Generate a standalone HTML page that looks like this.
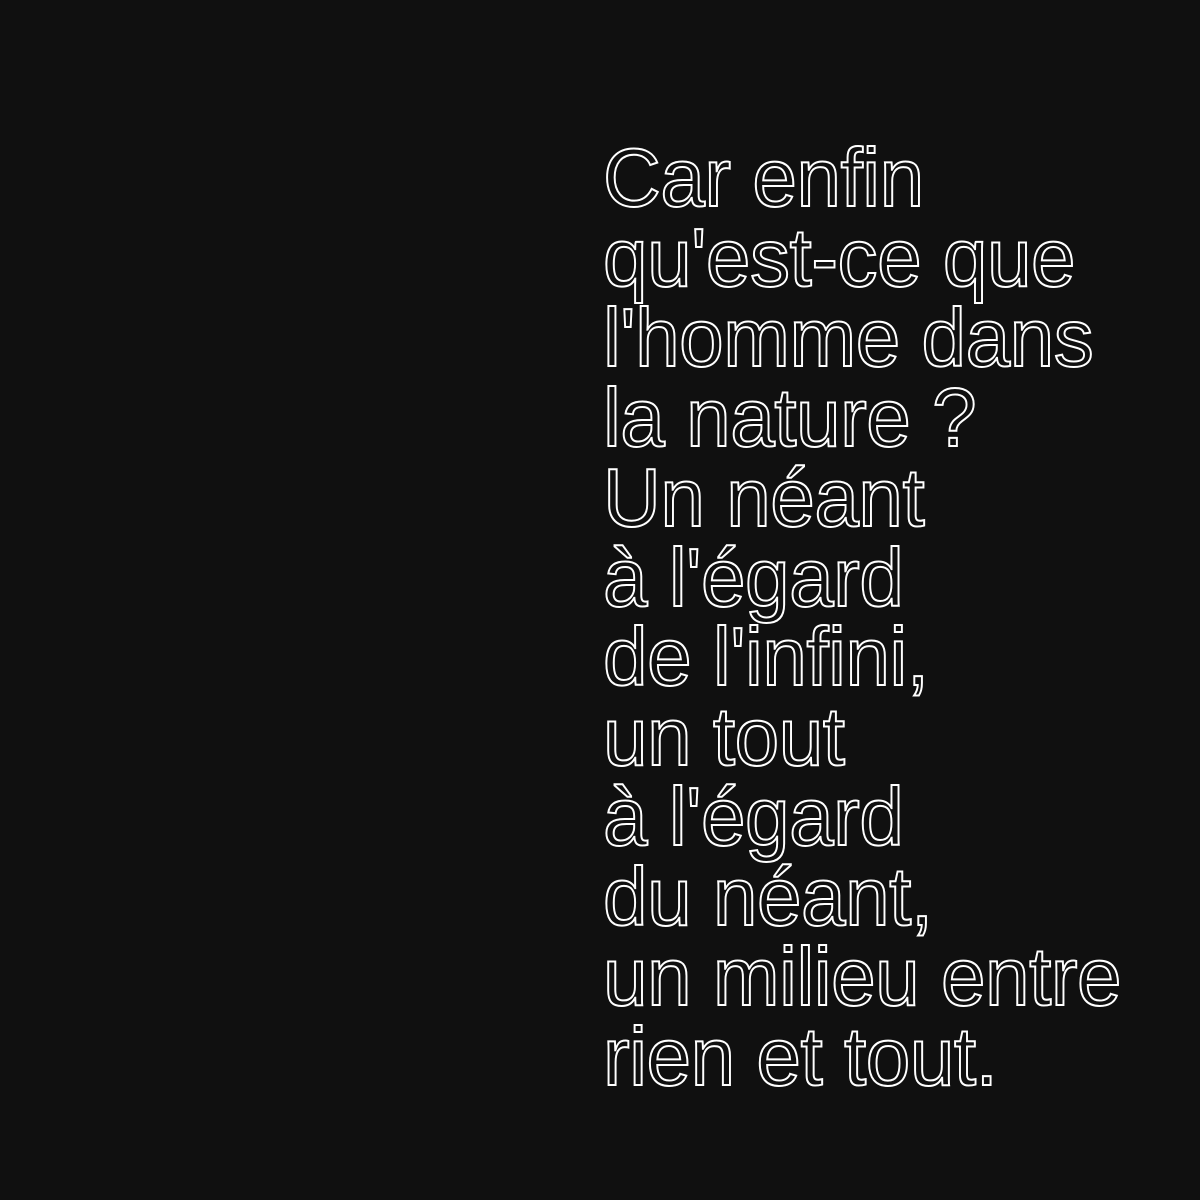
<!DOCTYPE html>
<html><head><meta charset="utf-8"><style>
html,body{margin:0;padding:0;background:#101010;}
body{width:1200px;height:1200px;overflow:hidden;position:relative;}
.t{position:absolute;left:603px;top:138px;font-family:"Liberation Sans",sans-serif;font-size:83px;line-height:79.9px;color:#101010;-webkit-text-stroke:2px #fff;transform:scaleX(0.965);transform-origin:0 0;white-space:pre;letter-spacing:-0.5px;}
</style></head><body>
<div class="t">Car enfin
qu'est-ce que
l'homme dans
la nature ?
Un néant
à l'égard
de l'infini,
un tout
à l'égard
du néant,
un milieu entre
rien et tout.</div>
</body></html>
